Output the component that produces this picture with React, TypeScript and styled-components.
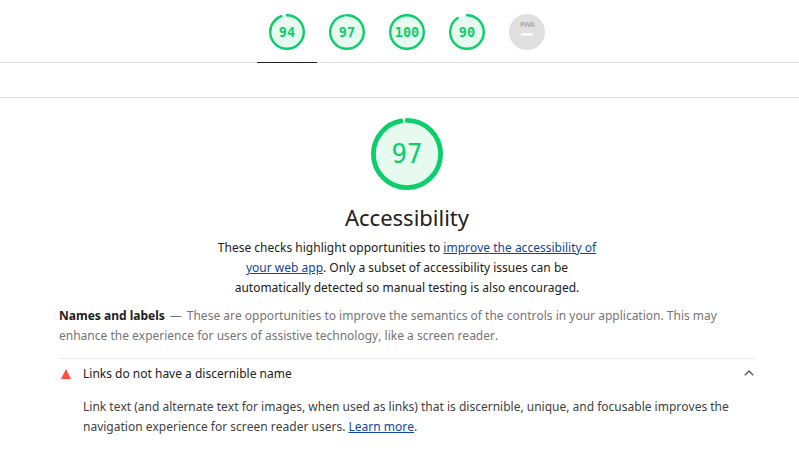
import React from "react";
import styled, { createGlobalStyle } from "styled-components";

const GlobalStyle = createGlobalStyle`
  * { box-sizing: border-box; }
  html, body { margin: 0; padding: 0; background: #fff; overflow: hidden; }
`;

const Report = styled.div`
  width: 100vw;
  height: 100vh;
  overflow: hidden;
  background: #fff;
  color: #212121;
  font-family: "Noto Sans", sans-serif;
  font-size: 12px;
  font-kerning: none;
  line-height: 20px;
`;

const ScoresHeader = styled.nav`
  display: flex;
  justify-content: center;
  height: 63px;
  padding-left: 15px;
  border-bottom: 1px solid #e0e0e0;
`;

const ScoreTab = styled.div<{ $active?: boolean }>`
  display: flex;
  justify-content: center;
  width: 60px;
  height: 63px;
  padding-top: 14px;
  border-bottom: 1px solid ${(p) => (p.$active ? "#212121" : "transparent")};
`;

const Spacer = styled.div`
  height: 35px;
  border-bottom: 1px solid #e0e0e0;
`;

const GaugeBox = styled.div<{ $size: number }>`
  display: grid;
  flex: none;
  place-items: center;
  width: ${(p) => p.$size}px;
  height: ${(p) => p.$size}px;

  > * { grid-area: 1 / 1; }
`;

const GaugeSvg = styled.svg`
  display: block;
  width: 100%;
  height: 100%;
  overflow: visible;
`;

const GaugeValue = styled.span<{ $size: number; $bold: boolean }>`
  padding-top: 2px;
  color: #0cce6b;
  font-family: "DejaVu Sans Mono", monospace;
  font-size: ${(p) => p.$size * 0.34 + 1.3}px;
  font-weight: ${(p) => (p.$bold ? 700 : 400)};
  line-height: 1;
`;

const PwaLabel = styled.span`
  align-self: start;
  padding-top: 6px;
  color: #adadad;
  font-size: 7.4px;
  font-weight: 700;
  letter-spacing: -0.9px;
  line-height: 8px;
`;

const Category = styled.main`
  display: flex;
  flex-direction: column;
  width: 696px;
  margin: 20px 0 0 59px;
`;

const CategoryHeader = styled.header`
  display: flex;
  flex-direction: column;
  align-items: center;
`;

const Title = styled.h1`
  margin: 7px 0 1px;
  font-size: 22px;
  font-weight: 400;
  line-height: 40px;
`;

const Description = styled.p`
  width: 400px;
  margin: 0;
  text-align: center;
`;

const Link = styled.a`
  color: #0d47a1;
  text-decoration: underline;
`;

const GroupHeader = styled.p`
  margin: 8px 0 12px;
  color: #757575;
`;

const GroupTitle = styled.strong`
  color: #212121;
  font-weight: 700;
`;

const Dash = styled.span`
  padding: 0 5px;
`;

const Audit = styled.section`
  border-top: 1px solid #ebebeb;
`;

const AuditHeader = styled.div`
  display: flex;
  align-items: center;
  height: 30px;
`;

const FailIcon = styled.svg`
  flex: none;
  width: 10px;
  height: 10px;
  margin: 0 12px 0 2px;
`;

const AuditTitle = styled.span`
  flex: 1;
`;

const Chevron = styled.svg`
  width: 10px;
  height: 6px;
  margin: 0 1px 2px 0;
`;

const AuditDescription = styled.p`
  width: 660px;
  margin: 8px 0 0 24px;
  color: #424242;
`;

const RADIUS = 56;
const STROKE = 8;
const CIRCUMFERENCE = 2 * Math.PI * RADIUS;

function Gauge({ score, size }: { score: number; size: number }) {
  const arc = (score / 100) * CIRCUMFERENCE;
  return (
    <GaugeBox $size={size}>
      <GaugeSvg viewBox="0 0 120 120">
        <circle cx="60" cy="60" r={RADIUS} fill="#0cce6b" fillOpacity="0.1" />
        <circle
          cx="60"
          cy="60"
          r={RADIUS}
          fill="none"
          stroke="#0cce6b"
          strokeWidth={STROKE}
          strokeLinecap="round"
          strokeDasharray={`${arc} ${CIRCUMFERENCE}`}
          transform="rotate(-90 60 60)"
        />
      </GaugeSvg>
      <GaugeValue $size={size} $bold={size < 50}>{score}</GaugeValue>
    </GaugeBox>
  );
}

function PwaGauge() {
  return (
    <GaugeBox $size={36}>
      <GaugeSvg viewBox="0 0 60 60">
        <circle cx="30" cy="30" r="30" fill="#e0e0e0" />
        <rect x="20" y="32" width="20" height="4" rx="1.5" fill="#fff" />
      </GaugeSvg>
      <PwaLabel>PWA</PwaLabel>
    </GaugeBox>
  );
}

const SCORES = [94, 97, 100, 90];

export default function App() {
  return (
    <Report>
      <GlobalStyle />
      <ScoresHeader>
        {SCORES.map((score, i) => (
          <ScoreTab key={score} $active={i === 0}>
            <Gauge score={score} size={36} />
          </ScoreTab>
        ))}
        <ScoreTab>
          <PwaGauge />
        </ScoreTab>
      </ScoresHeader>
      <Spacer />
      <Category>
        <CategoryHeader>
          <Gauge score={97} size={72} />
          <Title>Accessibility</Title>
          <Description>
            These checks highlight opportunities to{" "}
            <Link>improve the accessibility of your web app</Link>. Only a
            subset of accessibility issues can be automatically detected so
            manual testing is also encouraged.
          </Description>
        </CategoryHeader>
        <GroupHeader>
          <GroupTitle>Names and labels</GroupTitle>
          <Dash>—</Dash>
          These are opportunities to improve the semantics of the controls in
          your application. This may enhance the experience for users of
          assistive technology, like a screen reader.
        </GroupHeader>
        <Audit>
          <AuditHeader>
            <FailIcon viewBox="0 0 10 10">
              <path d="M5 0l5 10H0z" fill="#ff4e42" />
            </FailIcon>
            <AuditTitle>Links do not have a discernible name</AuditTitle>
            <Chevron viewBox="0 0 10 6">
              <path d="M.8 5.2L5 1l4.2 4.2" fill="none" stroke="#616161" strokeWidth="1.5" />
            </Chevron>
          </AuditHeader>
          <AuditDescription>
            Link text (and alternate text for images, when used as links) that
            is discernible, unique, and focusable improves the navigation
            experience for screen reader users. <Link>Learn more</Link>.
          </AuditDescription>
        </Audit>
      </Category>
    </Report>
  );
}
